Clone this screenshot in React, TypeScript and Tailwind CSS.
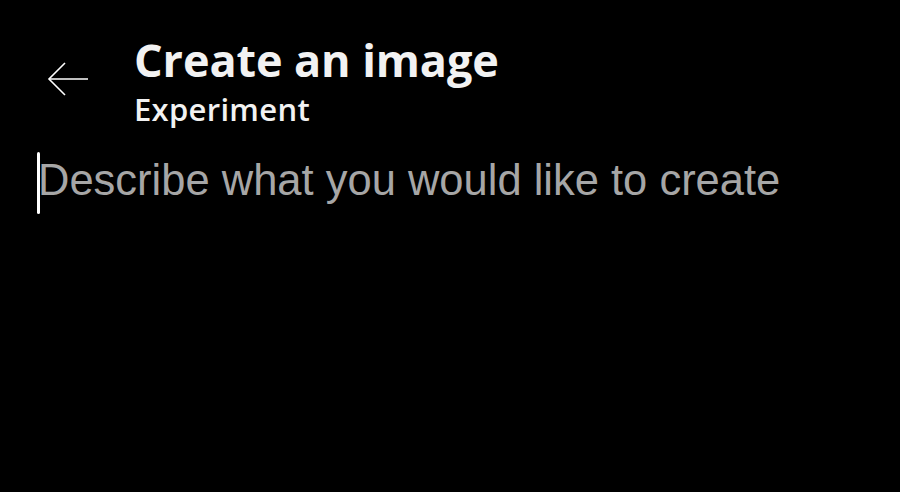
export default function App() {
  return (
    <div className="w-[900px] h-[492px] bg-black text-white overflow-hidden font-['Open_Sans',sans-serif]">
      {/* Header */}
      <header className="flex items-start pt-[30px]">
        <button className="ml-[46px] mt-[31px] w-[44px] h-[38px] flex items-center justify-center text-white">
          <svg width="42" height="36" viewBox="0 0 42 36" fill="none" stroke="currentColor" strokeWidth="1.6">
            <path d="M2 17H41" />
            <path d="M18 1L2 17L18 33" />
          </svg>
        </button>
        <div className="ml-[44px] flex flex-col">
          <h1 className="text-[45px] leading-[60px] font-bold tracking-[-0.1px] text-[#f2f2f2]">Create an image</h1>
          <p className="mt-[2px] text-[31px] leading-[34px] font-semibold tracking-[0.3px] text-[#f2f2f2]">Experiment</p>
        </div>
      </header>

      {/* Prompt input */}
      <div className="mt-[22px] ml-[37px] flex items-start">
        <span className="mt-[4px] w-[3px] h-[62px] bg-white rounded-sm" />
        <input
          type="text"
          placeholder="Describe what you would like to create"
          className="flex-1 bg-transparent outline-none text-[43.5px] text-white placeholder:text-[#a6a6a6] font-['Liberation_Sans',sans-serif] -ml-[2px]"
        />
      </div>
    </div>
  );
}
